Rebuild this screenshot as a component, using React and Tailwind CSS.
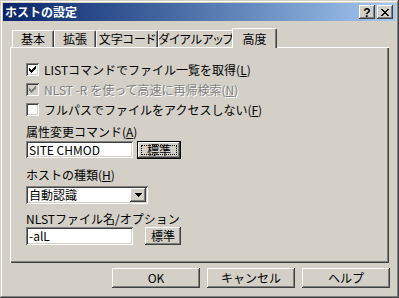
import React from "react";

const RAISED =
  "shadow-[inset_-1px_-1px_#404040,inset_1px_1px_#fff,inset_-2px_-2px_#808080,inset_2px_2px_#d4d0c8]";
const SUNKEN =
  "shadow-[inset_1px_1px_#808080,inset_-1px_-1px_#fff,inset_2px_2px_#404040,inset_-2px_-2px_#d4d0c8]";

const CHECK_COLS = [
  [3, 5],
  [4, 6],
  [5, 7],
  [6, 6],
  [7, 5],
  [8, 4],
  [9, 3],
];

function CheckBox({ checked, disabled }) {
  return (
    <div
      className={`relative w-[13px] h-[13px] shrink-0 ${SUNKEN} ${
        disabled ? "bg-[#d4d0c8]" : "bg-white"
      }`}
    >
      {checked && (
        <svg
          width="13"
          height="13"
          viewBox="0 0 13 13"
          shapeRendering="crispEdges"
          className="absolute left-0 top-0"
        >
          {CHECK_COLS.map(([x, y]) => (
            <rect
              key={x}
              x={x}
              y={y}
              width="1"
              height="3"
              fill={disabled ? "#808080" : "#000"}
            />
          ))}
        </svg>
      )}
    </div>
  );
}

function U({ children }) {
  return <span className="underline underline-offset-[1px]">{children}</span>;
}

function Tab({ w, children }) {
  return (
    <div
      className={`${w} h-[17px] shrink-0 flex items-center justify-center whitespace-nowrap [font-feature-settings:'palt'] border-l border-t border-white border-r border-r-[#404040] rounded-tr-[2px] rounded-tl-[1px] shadow-[inset_-1px_0_#808080] leading-[14px]`}
    >
      {children}
    </div>
  );
}

function TitleButton({ children }) {
  return (
    <div
      className={`w-[16px] h-[14px] bg-[#d4d0c8] flex items-center justify-center ${RAISED}`}
    >
      {children}
    </div>
  );
}

function Button({ w, children, focused, className = "" }) {
  if (focused) {
    return (
      <div className={`${w} h-[18px] border border-black bg-[#d4d0c8] ${className}`}>
        <div className={`w-full h-full p-[3px] ${RAISED}`}>
          <div className="w-full h-full border border-dotted border-black flex items-center justify-center leading-[12px]">
            {children}
          </div>
        </div>
      </div>
    );
  }
  return (
    <div
      className={`${w} bg-[#d4d0c8] flex items-center justify-center ${RAISED} ${className}`}
    >
      {children}
    </div>
  );
}

export default function App() {
  return (
    <div
      className={`w-[399px] h-[298px] bg-[#d4d0c8] p-[3px] flex flex-col overflow-hidden font-['Noto_Sans_CJK_JP',sans-serif] text-[12px] leading-[14px] text-black shadow-[inset_-1px_-1px_#404040,inset_1px_1px_#d4d0c8,inset_-2px_-2px_#808080,inset_2px_2px_#fff]`}
    >
      {/* Title bar */}
      <div className="h-[18px] shrink-0 bg-linear-to-r from-[#0a246a] to-[#a6caf0] flex items-center justify-between pl-[2px] pr-[3px]">
        <span className="text-white font-bold leading-[14px]">ホストの設定</span>
        <div className="flex gap-[2px]">
          <TitleButton>
            <span className="font-['Liberation_Sans',sans-serif] font-bold text-[12px] leading-[12px] mt-[1px]">
              ?
            </span>
          </TitleButton>
          <TitleButton>
            <svg width="8" height="7" viewBox="0 0 8 7" shapeRendering="crispEdges">
              <path
                d="M0 0h2v1H0zM6 0h2v1H6zM1 1h2v1H1zM5 1h2v1H5zM2 2h4v1H2zM3 3h2v1H3zM2 4h4v1H2zM1 5h2v1H1zM5 5h2v1H5zM0 6h2v1H0zM6 6h2v1H6z"
                fill="#000"
              />
            </svg>
          </TitleButton>
        </div>
      </div>

      {/* Tabs + panel */}
      <div className="ml-[7px] mt-[7px] w-[379px] flex flex-col shrink-0">
        <div className="flex items-end h-[19px] pl-[2px]">
          <Tab w="w-[42px]">基本</Tab>
          <Tab w="w-[42px]">拡張</Tab>
          <Tab w="w-[62px]">文字コード</Tab>
          <Tab w="w-[76px]">ダイアルアップ</Tab>
          <div className="relative z-10 w-[45px] h-[20px] -mb-[1px] -ml-[2px] shrink-0 bg-[#d4d0c8] flex items-start justify-center pt-[3px] whitespace-nowrap border-l border-t border-white border-r border-r-[#404040] rounded-tr-[2px] rounded-tl-[1px] shadow-[inset_-1px_0_#808080]">
            高度
          </div>
        </div>
        <div className="h-[216px] flex flex-col pl-[16px] pt-[16px] shadow-[inset_1px_1px_#fff,inset_-1px_-1px_#404040,inset_-2px_-2px_#808080]">
          <div className="flex flex-col gap-[7px]">
            <div className="h-[13px] flex items-center">
              <CheckBox checked />
              <span className="ml-[5px]">
                LISTコマンドでファイル一覧を取得(<U>L</U>)
              </span>
            </div>
            <div className="h-[13px] flex items-center">
              <CheckBox checked disabled />
              <span className="ml-[5px] text-[#808080] [text-shadow:1px_1px_0_#fff]">
                NLST -R を使って高速に再帰検索(<U>N</U>)
              </span>
            </div>
            <div className="h-[13px] flex items-center">
              <CheckBox />
              <span className="ml-[5px]">
                フルパスでファイルをアクセスしない(<U>F</U>)
              </span>
            </div>
          </div>

          <div className="mt-[9px] h-[14px]">
            属性変更コマンド(<U>A</U>)
          </div>
          <div className="mt-[2px] flex items-start">
            <div className={`w-[107px] h-[17px] bg-white pl-[3px] flex items-center ${SUNKEN}`}>
              SITE CHMOD
            </div>
            <Button w="w-[44px]" focused className="ml-[4px]">
              標準
            </Button>
          </div>

          <div className="mt-[9px] h-[14px]">
            ホストの種類(<U>H</U>)
          </div>
          <div
            className={`mt-[4px] w-[122px] h-[18px] bg-white flex items-center justify-between p-[2px] ${SUNKEN}`}
          >
            <span className="pl-[1px]">自動認識</span>
            <div className={`w-[16px] h-[14px] bg-[#d4d0c8] flex items-center justify-center ${RAISED}`}>
              <svg width="7" height="4" viewBox="0 0 7 4" shapeRendering="crispEdges">
                <path d="M0 0h7v1H0zM1 1h5v1H1zM2 2h3v1H2zM3 3h1v1H3z" fill="#000" />
              </svg>
            </div>
          </div>

          <div className="mt-[8px] h-[14px]">NLSTファイル名/オプション</div>
          <div className="mt-[1px] flex items-start">
            <div className={`w-[107px] h-[18px] bg-white pl-[3px] flex items-center ${SUNKEN}`}>
              -alL
            </div>
            <Button w="w-[36px] h-[18px]" className="ml-[12px]">
              標準
            </Button>
          </div>
        </div>
      </div>

      {/* Bottom buttons */}
      <div className="mt-[5px] flex justify-end gap-[7px] pr-[6px]">
        <Button w="w-[88px] h-[20px]">OK</Button>
        <Button w="w-[88px] h-[20px]">キャンセル</Button>
        <Button w="w-[88px] h-[20px]">ヘルプ</Button>
      </div>
    </div>
  );
}
